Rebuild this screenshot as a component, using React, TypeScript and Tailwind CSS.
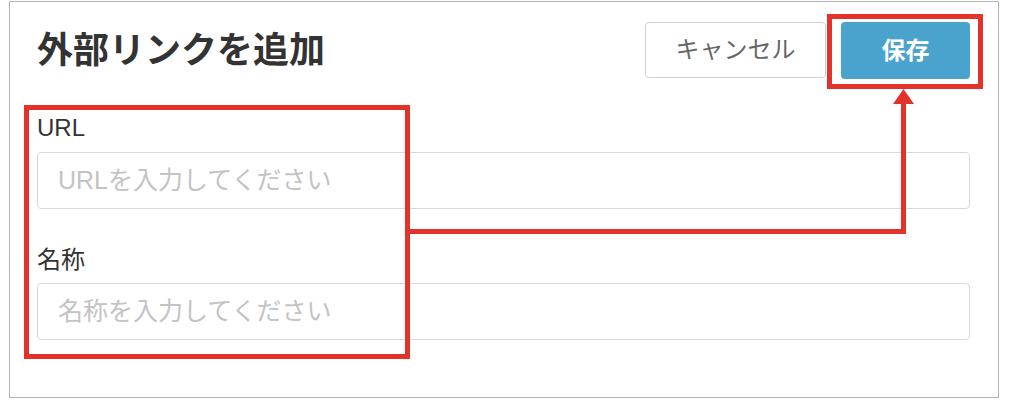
export default function App() {
  const font = "font-['Liberation_Sans','Noto_Sans_CJK_JP',sans-serif]"

  return (
    <div className={`relative h-[406px] w-[1014px] bg-white ${font}`}>
      {/* Dialog */}
      <div className="ml-[9px] mt-[1px] h-[397px] w-[990px] border border-[#b3b3b3] bg-white pl-[27px] pr-[28px] pt-[20px]">
        <div className="flex h-[57px] items-center justify-between">
          <h1 className="text-[36px] font-bold leading-none text-[#333]">外部リンクを追加</h1>
          <div className="flex items-start gap-[15px]">
            <button className="h-[56px] w-[181px] rounded-[4px] border border-[#d2d2d2] bg-white text-[24px] text-[#666]">
              キャンセル
            </button>
            <button className="h-[57px] w-[129px] rounded-[4px] bg-[#4aa3cd] text-[24px] font-bold text-white">
              保存
            </button>
          </div>
        </div>

        <div className="mt-[31px]">
          <label className="block h-[36px] text-[24px] leading-[36px] text-[#333]">URL</label>
          <input
            className="mt-[6px] block h-[57px] w-full rounded-[4px] border border-[#d9d9d9] pl-[20px] text-[25px] outline-none placeholder:text-[#c3c3c3]"
            placeholder="URLを入力してください"
          />
        </div>

        <div className="mt-[33px]">
          <label className="block h-[36px] text-[24px] leading-[36px] text-[#333]">名称</label>
          <input
            className="mt-[5px] block h-[57px] w-full rounded-[4px] border border-[#d9d9d9] pl-[20px] text-[25px] outline-none placeholder:text-[#c3c3c3]"
            placeholder="名称を入力してください"
          />
        </div>
      </div>

      {/* Annotation overlay */}
      <svg className="pointer-events-none absolute left-0 top-0" width="1014" height="406" viewBox="0 0 1014 406">
        <g fill="none" stroke="#e2332a" strokeWidth="5">
          <rect x="829.5" y="15.5" width="151" height="70" />
          <rect x="26.5" y="106.5" width="381" height="249" />
          <polyline points="408,230.5 903.5,230.5 903.5,100" />
        </g>
        <polygon points="903.5,88 893,103 914,103" fill="#e2332a" />
      </svg>
    </div>
  )
}
